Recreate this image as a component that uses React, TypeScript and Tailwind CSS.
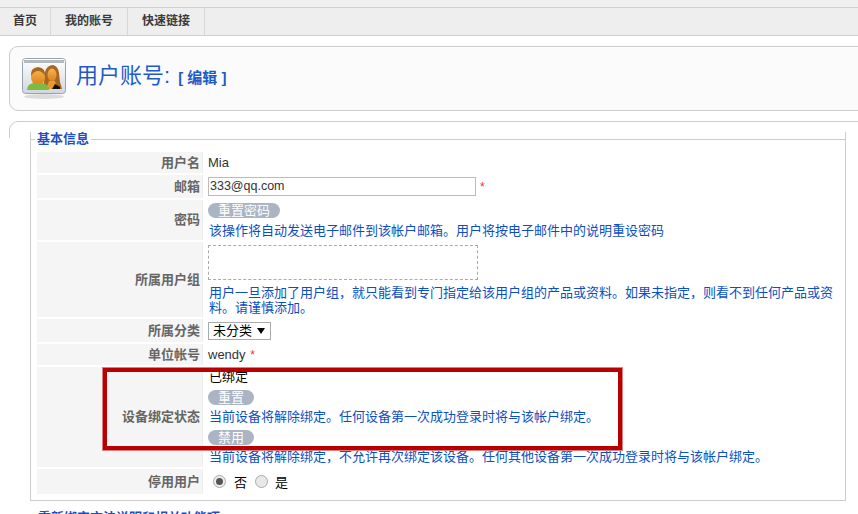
const cjk = { fontFamily: '"Liberation Sans","Noto Sans CJK SC",sans-serif' };

function Label({ children }: { children: React.ReactNode }) {
  return (
    <div className="w-[166px] shrink-0 bg-[#f5f5f5] border-r border-r-[#eeeeee] flex items-center justify-end pr-[2px] text-[13px] font-bold text-[#666666] leading-[16px]">
      {children}
    </div>
  );
}

function Pill({ children, w }: { children: React.ReactNode; w: string }) {
  return (
    <div className={`${w} h-[15px] rounded-full bg-[#aab4c2] text-white text-[13px] leading-[15px] text-center`}>{children}</div>
  );
}

function Hint({ children }: { children: React.ReactNode }) {
  return <div className="text-[13px] leading-[15px] text-[#0b4fc0]">{children}</div>;
}

function Row({ h, children, label }: { h: string; children: React.ReactNode; label: string }) {
  return (
    <div className={`flex ${h}`}>
      <Label>{label}</Label>
      <div className="flex-1 pl-[5px] min-w-0">{children}</div>
    </div>
  );
}

function UsersIcon() {
  return (
    <svg width="44" height="42" viewBox="0 0 44 42" className="shrink-0 mt-[1px]">
      <defs>
        <linearGradient id="win" x1="0" y1="0" x2="0" y2="1">
          <stop offset="0" stopColor="#ffffff" />
          <stop offset="1" stopColor="#d0d6df" />
        </linearGradient>
        <linearGradient id="skin" x1="0" y1="0" x2="0" y2="1">
          <stop offset="0" stopColor="#f6b84e" />
          <stop offset="1" stopColor="#d97f1a" />
        </linearGradient>
      </defs>
      <ellipse cx="22" cy="38.5" rx="20" ry="2.5" fill="#dcdcdc" />
      <rect x="0.5" y="0.5" width="43" height="35" rx="3" fill="url(#win)" stroke="#9aa2ad" />
      <rect x="2" y="2" width="40" height="3" fill="#b4b9c0" />
      <path d="M22 24 L23 14 Q25 7 31 7 Q36 8 37 15 L38 24 L40 31 L22 31 Z" fill="#a9651f" />
      <ellipse cx="30" cy="17" rx="4.5" ry="6.5" fill="url(#skin)" />
      <path d="M24 31 L27 23 L33 23 L35 31 Z" fill="#e59a33" />
      <path d="M30 31 L33 26 L38 29 L38 31 Z" fill="#111111" />
      <ellipse cx="16" cy="19" rx="7" ry="9" fill="url(#skin)" />
      <path d="M9 18 Q8 10 16 9 Q24 10 23 18 Q20 13 16 13 Q12 13 9 18 Z" fill="#a9651f" />
      <path d="M5 32 Q5 26 12 25 L20 25 Q27 26 27 32 Z" fill="#7cbb3f" />
    </svg>
  );
}

export default function App() {
  return (
    <div className="relative w-[858px] h-[514px] overflow-hidden bg-white" style={cjk}>
      <div className="h-[7px] bg-[#f0f0f0]" />
      <div className="h-[29px] flex bg-[#eeeeee] border-y border-[#d0d0d0] text-[12px] font-bold text-[#3a3a3a] leading-[27px]">
        <div className="w-[51px] border-r-[1px] border-[#d8d8d8] text-center">首页</div>
        <div className="w-[77px] border-r-[1px] border-[#d8d8d8] text-center">我的账号</div>
        <div className="w-[77px] border-r-[1px] border-[#d8d8d8] text-center">快速链接</div>
      </div>

      <div className="mt-[10px] ml-[9px] w-[900px] h-[65px] flex items-center pl-[12px] rounded-l-[9px] bg-[#fbfbfb] border border-[#cccccc]">
        <UsersIcon />
        <div className="ml-[10px] mb-[6px] flex items-baseline text-[#1f5bc8]">
          <span className="text-[22px] leading-[30px]">用户账号:</span>
          <span className="ml-[8px] text-[15px] font-bold">[ 编辑 ]</span>
        </div>
      </div>

      <div className="mt-[10px] ml-[9px] w-[900px] h-[17px] rounded-tl-[9px] border-t border-l border-[#cccccc]" />

      <fieldset className="absolute left-[30px] top-[132px] w-[816px] h-[369px] border border-[#cccccc] border-t-0 pt-[20px] pl-[6px]">
        <div className="absolute left-0 right-0 top-[7px] h-px bg-[#cccccc]" />
        <div className="absolute left-[4px] -top-[1px] px-[2px] bg-white text-[13px] leading-[15px] font-bold text-[#1f4fc8]">基本信息</div>
        <div className="flex flex-col gap-[2px] text-[13px] text-[#333333]">
          <Row h="h-[21px]" label="用户名">
            <div className="text-[13px] leading-[21px] text-[#333333]">Mia</div>
          </Row>
          <Row h="h-[23px]" label="邮箱">
            <div className="flex items-center h-full">
              <div className="w-[268px] h-[19px] border border-[#bbbbbb] pl-[1px] text-[12.5px] leading-[17px] text-[#333333]">333@qq.com</div>
              <span className="ml-[4px] text-[#ee3333] text-[12px]">*</span>
            </div>
          </Row>
          <Row h="h-[40px]" label="密码">
            <div className="pt-[3px] flex flex-col gap-[5px]">
              <Pill w="w-[72px]">重置密码</Pill>
              <div className="pl-[1px]"><Hint>该操作将自动发送电子邮件到该帐户邮箱。用户将按电子邮件中的说明重设密码</Hint></div>
            </div>
          </Row>
          <Row h="h-[75px]" label="所属用户组">
            <div className="pt-[3px]">
              <div className="w-[270px] h-[35px] border border-dashed border-[#aaaaaa]" />
              <div className="mt-[5px] pl-[1px] w-[630px]">
                <Hint>用户一旦添加了用户组，就只能看到专门指定给该用户组的产品或资料。如果未指定，则看不到任何产品或资料。请谨慎添加。</Hint>
              </div>
            </div>
          </Row>
          <Row h="h-[23px]" label="所属分类">
            <div className="flex items-center h-full">
              <div className="w-[63px] h-[18px] border border-[#aaaaaa] flex items-center justify-between pl-[4px] pr-[5px] text-[13px] text-black">
                <span>未分类</span>
                <span className="w-0 h-0 border-x-[4px] border-x-transparent border-t-[6px] border-t-black" />
              </div>
            </div>
          </Row>
          <Row h="h-[21px]" label="单位帐号">
            <div className="leading-[21px] text-[#333333]">wendy <span className="ml-[1px] text-[#ee3333] text-[12px]">*</span></div>
          </Row>
          <Row h="h-[100px]" label="设备绑定状态">
            <div className="text-black pl-[1px]">
              <div className="h-[23px] leading-[20px]">已绑定</div>
              <div className="-ml-[1px] w-[46px]"><Pill w="w-[46px]">重置</Pill></div>
              <div className="h-[25px] pt-[4px]"><Hint>当前设备将解除绑定。任何设备第一次成功登录时将与该帐户绑定。</Hint></div>
              <div className="-ml-[1px] w-[46px]"><Pill w="w-[46px]">禁用</Pill></div>
              <div className="h-[25px] pt-[4px]"><Hint>当前设备将解除绑定，不允许再次绑定该设备。任何其他设备第一次成功登录时将与该帐户绑定。</Hint></div>
            </div>
          </Row>
          <Row h="h-[25px]" label="停用用户">
            <div className="flex items-center h-full pl-[5px] text-black">
              <span className="w-[13px] h-[13px] rounded-full border border-[#aaaaaa] bg-[#eeeeee] flex items-center justify-center">
                <span className="w-[7px] h-[7px] rounded-full bg-[#555555]" />
              </span>
              <span className="ml-[8px] mt-[3px]">否</span>
              <span className="ml-[8px] w-[13px] h-[13px] rounded-full border border-[#aaaaaa] bg-[#e8e8e8]" />
              <span className="ml-[7px] mt-[3px]">是</span>
            </div>
          </Row>
        </div>
      </fieldset>

      <div className="absolute left-[38px] top-[510px] text-[13px] leading-[15px] font-bold text-[#1f4fc8] whitespace-nowrap">重新绑定方法说明和相关功能项</div>

      <div className="absolute left-[103px] top-[368px] w-[519px] h-[82px] border-[4px] border-[#b80000] outline outline-1 outline-[#d98080]" />
    </div>
  );
}
